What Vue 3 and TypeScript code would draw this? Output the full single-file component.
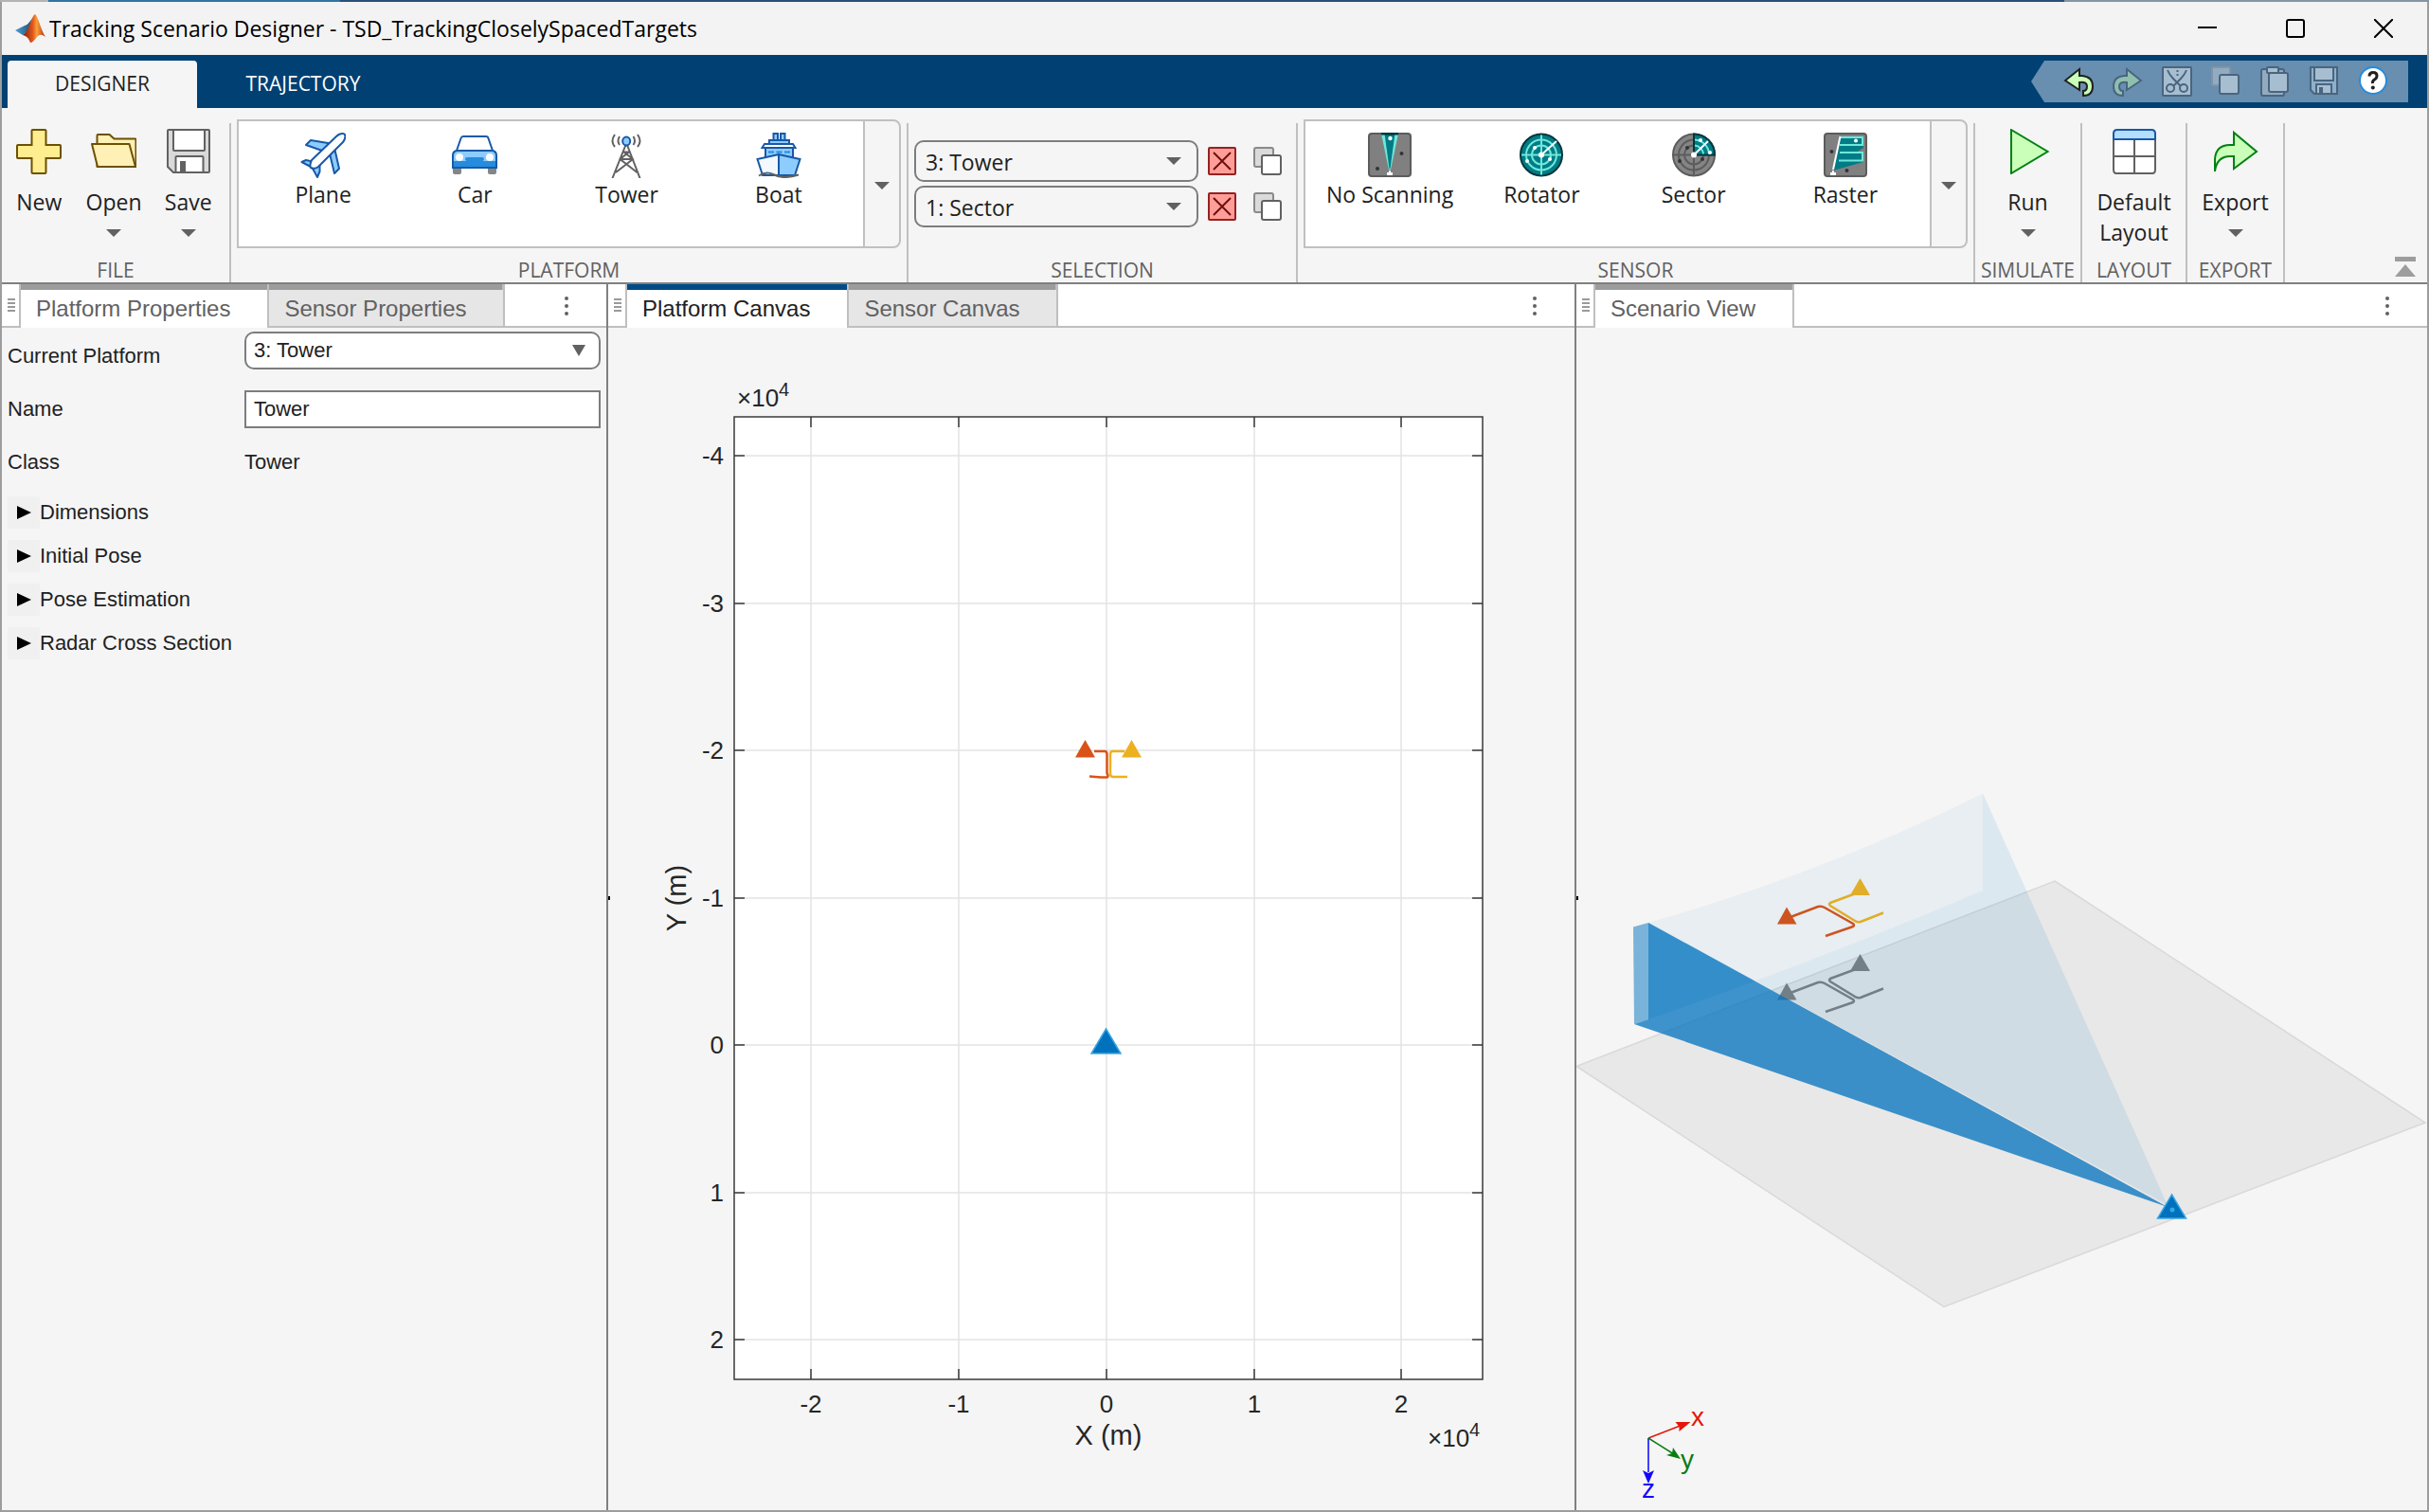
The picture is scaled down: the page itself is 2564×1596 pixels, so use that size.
<script setup lang="ts">
import { ref } from 'vue'

interface GalleryItem {
  label: string
  icon: string
}

interface Tick {
  label: string
  at: number
}

const platforms: GalleryItem[] = [
  { label: 'Plane', icon: 'plane' },
  { label: 'Car', icon: 'car' },
  { label: 'Tower', icon: 'tower' },
  { label: 'Boat', icon: 'boat' },
]

const sensors: GalleryItem[] = [
  { label: 'No Scanning', icon: 'noscan' },
  { label: 'Rotator', icon: 'rotator' },
  { label: 'Sector', icon: 'sector' },
  { label: 'Raster', icon: 'raster' },
]

const quickActions: GalleryItem[] = [
  { label: 'Undo', icon: 'undo' },
  { label: 'Redo', icon: 'redo' },
  { label: 'Cut', icon: 'cut' },
  { label: 'Copy', icon: 'qcopy' },
  { label: 'Paste', icon: 'paste' },
  { label: 'Save', icon: 'qsave' },
  { label: 'Help', icon: 'help' },
]

const platformOptions = ['1: Plane', '2: Plane', '3: Tower']
const sensorOptions = ['1: Sector']
const currentPlatform = ref('3: Tower')
const currentSensor = ref('1: Sector')
const platformName = ref('Tower')
const groups = ['Dimensions', 'Initial Pose', 'Pose Estimation', 'Radar Cross Section']

const plot = { left: 133, right: 923, top: 94, bottom: 1110 }
const xTicks: Tick[] = [
  { label: '-2', at: 214 },
  { label: '-1', at: 370 },
  { label: '0', at: 526 },
  { label: '1', at: 682 },
  { label: '2', at: 837 },
]
const yTicks: Tick[] = [
  { label: '-4', at: 135 },
  { label: '-3', at: 291 },
  { label: '-2', at: 446 },
  { label: '-1', at: 602 },
  { label: '0', at: 757 },
  { label: '1', at: 913 },
  { label: '2', at: 1068 },
]
</script>

<template>
  <svg class="sprite" aria-hidden="true">
    <symbol id="i-new" viewBox="0 0 48 48">
      <path d="M17.500 1h13q1 0 1 1v15h14.500q1 0 1 1v12q0 1-1 1H31.500v15q0 1-1 1h-13q-1 0-1-1V31H2q-1 0-1-1V18q0-1 1-1h14.500V2q0-1 1-1z" fill="#ffee90" stroke="#6e5000" stroke-width="2" />
    </symbol>
    <symbol id="i-open" viewBox="0 0 48 48">
      <path d="M6.500 40V7q0-1 1-1h12l5 4.500h22q1 0 1 1V40z" fill="#fff0b5" stroke="#6e5000" stroke-width="2" stroke-linejoin="round" />
      <path d="M1 16h39.500l6.500 24H7z" fill="#fff0b5" stroke="#6e5000" stroke-width="2" stroke-linejoin="round" />
    </symbol>
    <symbol id="i-save" viewBox="0 0 48 48">
      <path d="M3 1h42q1 0 1 1v43q0 1-1 1H8l-6-6V2q0-1 1-1z" fill="#d9d9d9" stroke="#616161" stroke-width="2" />
      <path d="M8 1v21q0 1 1 1h31q1 0 1-1V1z" fill="#fff" stroke="#616161" stroke-width="2" />
      <path d="M10.500 46V30q0-1 1-1h27q1 0 1 1v16z" fill="#fff" stroke="#616161" stroke-width="2" />
      <path d="M15 34h6v11h-6z" fill="#616161" />
    </symbol>
    <symbol id="i-plane" viewBox="0 0 48 48">
      <g stroke="#1759a8" stroke-width="2" stroke-linejoin="round">
        <path d="M11 8l21 3.500-9 7.500-17-6z" fill="#8dccff" />
        <path d="M36 16l5 22-5 5-5-21z" fill="#8dccff" />
        <path d="M1.500 31l4.500-2 9 2-4 5z" fill="#8dccff" />
        <path d="M12 36l6 11 2.500-6v-8z" fill="#8dccff" />
        <path d="M38 4c3-3 7-3.500 8.500-2.500C48 3 47.500 7 45 10L19 36c-3 2.500-6 2-8 1-1-2-.500-5 1-8z" fill="#fff" />
      </g>
    </symbol>
    <symbol id="i-car" viewBox="0 0 48 48">
      <path d="M1 36h9v6q0 2-2 2H3q-2 0-2-2zM38 36h9v6q0 2-2 2h-5q-2 0-2-2z" fill="#858585" />
      <path d="M5 19L9.500 6q.6-2 2.500-2h24q2 0 2.500 2L43 19z" fill="#fff" stroke="#1759a8" stroke-width="2" />
      <path d="M5 19h38q4 1 4 5v13H1V24q0-4 4-5z" fill="#8dccff" />
      <path d="M1 30h46v7H1z" fill="#268cdd" />
      <path d="M5 19h38q4 1 4 5v13H1V24q0-4 4-5z" fill="none" stroke="#1759a8" stroke-width="2" />
      <circle cx="8" cy="26" r="4" fill="#fff" /><circle cx="40" cy="26" r="4" fill="#fff" />
      <rect x="14" y="26" width="20" height="4" rx="2" fill="#268cdd" />
    </symbol>
    <symbol id="i-tower" viewBox="0 0 48 48">
      <g fill="none" stroke="#616161" stroke-width="2">
        <path d="M22.500 13L8.500 48M24 13l13.500 35M16.500 28h14M20 20l10 8-18 14M26.500 20l-10 8 18 14M19 20.500h8" />
        <path d="M11 2q-5 7 0 13M16 4q-3 5 0 9M35 2q5 7 0 13M30.500 4q3 5 0 9" />
      </g>
      <ellipse cx="23.200" cy="9" rx="4" ry="4.500" fill="#8dccff" stroke="#1759a8" stroke-width="2" />
    </symbol>
    <symbol id="i-boat" viewBox="0 0 48 48">
      <g fill="#8dccff" stroke="#1759a8" stroke-width="2">
        <path d="M18.500 1h4.500v7h-4.500zM26 1h4.500v7H26z" />
        <path d="M14 8h21v4H14z" />
        <path d="M9 12h30l2.500 4H6.500z" fill="#fff" />
        <path d="M10 16h29v10H10z" />
        <path d="M13 20.500h23" stroke="#268cdd" stroke-dasharray="6 2.500" />
        <path d="M24 23L1.500 28 7 45h17z" fill="#f2f9ff" />
        <path d="M24 23l22.500 5L41 45H24z" />
      </g>
      <path d="M3 45.500q8-5 15-1.500t14 3q6-.500 13-2.500" fill="none" stroke="#616161" stroke-width="2" />
    </symbol>
    <symbol id="i-noscan" viewBox="0 0 48 48">
      <rect x="2" y="1" width="44" height="45" rx="3" fill="#808080" stroke="#5c5c5c" stroke-width="2" />
      <path d="M15 1h18l-8 38h-2z" fill="#6fe8da" />
      <path d="M18.500 1h11L24.500 38h-1z" fill="#007c86" />
      <path d="M15 0h18v2.500H15z" fill="#00363c" />
      <path d="M23 40h2v2h2v3h-6v-3h2z" fill="#fff" />
      <circle cx="24.500" cy="6" r="2.200" fill="#fff" />
      <circle cx="36.500" cy="22" r="2" fill="#333" /><circle cx="11" cy="38" r="2" fill="#333" />
    </symbol>
    <symbol id="i-rotator" viewBox="0 0 48 48">
      <circle cx="24" cy="23.500" r="22" fill="#007c86" stroke="#00363c" stroke-width="2" />
      <g fill="none" stroke="#6fe8da" stroke-width="2">
        <circle cx="24" cy="23.500" r="16" /><circle cx="24" cy="23.500" r="10" />
        <path d="M24 2.500v42M3 23.500h42" />
      </g>
      <path d="M24 23.500L40 9" stroke="#fff" stroke-width="2" />
      <circle cx="24" cy="23.500" r="3" fill="#fff" />
      <circle cx="17" cy="16" r="2" fill="#fff" /><circle cx="33" cy="28" r="2" fill="#fff" /><circle cx="9" cy="30" r="2" fill="#fff" />
    </symbol>
    <symbol id="i-sector" viewBox="0 0 48 48">
      <circle cx="24" cy="23.500" r="22" fill="#858585" stroke="#5c5c5c" stroke-width="2" />
      <g fill="none" stroke="#5c5c5c" stroke-width="2">
        <circle cx="24" cy="23.500" r="16" /><circle cx="24" cy="23.500" r="10" />
        <path d="M24 2.500v42M3 23.500h42" />
      </g>
      <path d="M24 1.500a22 22 0 0 1 22 22H24z" fill="#007c86" stroke="#00363c" stroke-width="2" />
      <path d="M25 7.500a16 16 0 0 1 15 15M25 13.500a10 10 0 0 1 9 9" fill="none" stroke="#6fe8da" stroke-width="2" />
      <path d="M24 23.500L39 9" stroke="#fff" stroke-width="2" />
      <circle cx="24" cy="23.500" r="3" fill="#fff" />
      <circle cx="31" cy="8" r="2" fill="#fff" /><circle cx="41" cy="21" r="2" fill="#fff" />
      <circle cx="17" cy="16" r="2" fill="#333" /><circle cx="33" cy="28" r="2" fill="#333" /><circle cx="9" cy="30" r="2" fill="#333" />
    </symbol>
    <symbol id="i-raster" viewBox="0 0 48 48">
      <rect x="2" y="1" width="44" height="45" rx="3" fill="#808080" stroke="#5c5c5c" stroke-width="2" />
      <path d="M18 4h25v12l-8 5h8v10L11 40z" fill="#007c86" />
      <path d="M19 5h23v8H18M18 21h24v8.500H17" fill="none" stroke="#6fe8da" stroke-width="2" />
      <path d="M18.500 4L11 39" stroke="#fff" stroke-width="2" />
      <path d="M10 40h2v2h2v3H8v-3h2z" fill="#fff" />
      <circle cx="35" cy="8.500" r="2" fill="#fff" />
      <circle cx="9.500" cy="20" r="2" fill="#333" /><circle cx="25.500" cy="40" r="2" fill="#333" />
    </symbol>
    <symbol id="i-run" viewBox="0 0 48 48">
      <path d="M6 1l38.500 23L6 47z" fill="#c9ffb8" stroke="#008013" stroke-width="2" />
    </symbol>
    <symbol id="i-layout" viewBox="0 0 48 48">
      <path d="M2 11v32q0 4 3 4h38q3 0 3-4V11z" fill="#fff" stroke="#616161" stroke-width="2" />
      <path d="M24 11v36M2 29h44" stroke="#616161" stroke-width="2" />
      <path d="M2 11V5q0-4 4-4h36q4 0 4 4v6z" fill="#b3deff" stroke="#1759a8" stroke-width="2" />
    </symbol>
    <symbol id="i-export" viewBox="0 0 48 48">
      <path d="M2 45V32Q3 17 18 17h4V4l24 20-24 18V29h-4Q4 29 2 45z" fill="#c9ffb8" stroke="#008013" stroke-width="2" />
    </symbol>
    <symbol id="i-delete" viewBox="0 0 30 30">
      <rect x="1" y="1" width="28" height="28" rx="1" fill="#ff9e98" stroke="#962121" stroke-width="2" />
      <path d="M6 6l18 18M24 6L6 24" stroke="#6e1010" stroke-width="2" />
    </symbol>
    <symbol id="i-copy" viewBox="0 0 30 30">
      <rect x="1" y="1" width="20" height="20" rx="2" fill="#dadada" stroke="#8a8a8a" stroke-width="2" />
      <rect x="9" y="9" width="20" height="20" rx="2" fill="#fff" stroke="#616161" stroke-width="2" />
    </symbol>
    <symbol id="i-undo" viewBox="0 0 32 32">
      <path d="M2 15L17 3v7h3q11 1 11 11 0 10-10 10v-5q4 0 4-5t-8-4v8z" fill="#c9ffb8" stroke="#212121" stroke-width="2" />
    </symbol>
    <symbol id="i-redo" viewBox="0 0 32 32">
      <path d="M30 15L15 3v7h-3Q1 11 1 21q0 10 10 10v-5q-4 0-4-5t8-4v8z" fill="#8fbfae" stroke="#49657f" stroke-width="2" />
    </symbol>
    <symbol id="i-cut" viewBox="0 0 32 32">
      <rect x="1" y="1" width="30" height="30" rx="1" fill="#a7bed1" stroke="#49657f" stroke-width="2" />
      <g fill="none" stroke="#49657f" stroke-width="2">
        <path d="M6 4q2 5 6 9l8 8M26 4q-2 5-6 9l-8 8" />
        <circle cx="9" cy="23" r="4" /><circle cx="23" cy="23" r="4" />
        <path d="M16.500 4v8" stroke-dasharray="2 2" />
      </g>
    </symbol>
    <symbol id="i-qcopy" viewBox="0 0 32 32">
      <rect x="1" y="1" width="19" height="19" rx="1" fill="#93abc0" stroke="#7f95a8" stroke-width="2" />
      <rect x="9" y="9" width="20" height="20" rx="2" fill="#a7bed1" stroke="#49657f" stroke-width="2" />
    </symbol>
    <symbol id="i-paste" viewBox="0 0 32 32">
      <rect x="1" y="3" width="24" height="28" rx="2" fill="#93abc0" stroke="#49657f" stroke-width="2" />
      <rect x="7" y="1" width="12" height="6" rx="1" fill="#a7bed1" stroke="#49657f" stroke-width="2" />
      <rect x="9" y="7" width="20" height="20" rx="2" fill="#a7bed1" stroke="#49657f" stroke-width="2" />
    </symbol>
    <symbol id="i-qsave" viewBox="0 0 32 32">
      <path d="M1 1h28v28H5l-4-4z" fill="#8db0cc" stroke="#49657f" stroke-width="2" />
      <path d="M5 1h20v14H5z" fill="#a7bed1" stroke="#49657f" stroke-width="2" />
      <path d="M7 29V19h16v10z" fill="#a7bed1" stroke="#49657f" stroke-width="2" />
      <path d="M10 22h4v7h-4z" fill="#49657f" />
    </symbol>
    <symbol id="i-help" viewBox="0 0 32 32">
      <circle cx="15" cy="15" r="14" fill="#fff" stroke="#268cdd" stroke-width="2" />
      <path d="M11 10.500q0-4 4-4t4 3.500q0 2.500-2.500 4t-2 4" fill="none" stroke="#212121" stroke-width="3" />
      <circle cx="14.800" cy="22.500" r="2" fill="#212121" />
    </symbol>
    <symbol id="i-down" viewBox="0 0 16 8"><path d="M0 0h16L8 8z" fill="#616161" /></symbol>
  </svg>

  <div class="window">
    <header class="titlebar">
      <svg class="logo" viewBox="0 0 32 32" aria-hidden="true">
        <defs>
          <linearGradient id="wing" x1="0" y1="0" x2="1" y2="0">
            <stop offset="0" stop-color="#4d9fd6" /><stop offset="1" stop-color="#20506f" />
          </linearGradient>
          <linearGradient id="flame" x1="0" y1="0" x2="1" y2="0">
            <stop offset="0" stop-color="#7c1d12" /><stop offset=".45" stop-color="#e5591d" />
            <stop offset=".62" stop-color="#f9a13a" /><stop offset="1" stop-color="#b32a14" />
          </linearGradient>
        </defs>
        <path d="M0 18l10-5q4-1 8-8l-4 13-6 5z" fill="url(#wing)" />
        <path d="M21 1c3 2 6 16 11 24-4-3-6-3-9 0-3 4-5 6-7 6-2-5-4-7-8-8 7-4 9-20 13-22z" fill="url(#flame)" />
      </svg>
      <h1>Tracking Scenario Designer - TSD_TrackingCloselySpacedTargets</h1>
      <div class="controls">
        <button type="button" aria-label="Minimize">
          <svg viewBox="0 0 20 20"><path d="M0 9h20" stroke="#000" stroke-width="2" /></svg>
        </button>
        <button type="button" aria-label="Maximize">
          <svg viewBox="0 0 20 20"><rect x="1" y="1" width="18" height="18" rx="2" fill="none" stroke="#000" stroke-width="2" /></svg>
        </button>
        <button type="button" aria-label="Close">
          <svg viewBox="0 0 20 20"><path d="M0 0l20 20M20 0L0 20" stroke="#000" stroke-width="2" /></svg>
        </button>
      </div>
    </header>

    <nav class="ribbon-tabs">
      <button type="button" class="ribbon-tab active">DESIGNER</button>
      <button type="button" class="ribbon-tab">TRAJECTORY</button>
      <div class="quick">
        <button v-for="a in quickActions" :key="a.icon" type="button" :aria-label="a.label">
          <svg><use :href="`#i-${a.icon}`" /></svg>
        </button>
      </div>
    </nav>

    <div class="ribbon">
      <section class="group file">
        <div class="tools">
          <button type="button" class="tool"><svg class="big"><use href="#i-new" /></svg><span>New</span></button>
          <button type="button" class="tool"><svg class="big"><use href="#i-open" /></svg><span>Open</span><svg class="down"><use href="#i-down" /></svg></button>
          <button type="button" class="tool"><svg class="big"><use href="#i-save" /></svg><span>Save</span><svg class="down"><use href="#i-down" /></svg></button>
        </div>
        <h2>FILE</h2>
      </section>
      <i class="rule"></i>
      <section class="group wide">
        <div class="gallery">
          <div class="items">
            <button v-for="p in platforms" :key="p.icon" type="button" class="item">
              <svg class="big"><use :href="`#i-${p.icon}`" /></svg><span>{{ p.label }}</span>
            </button>
          </div>
          <button type="button" class="more" aria-label="More platforms"><svg class="down"><use href="#i-down" /></svg></button>
        </div>
        <h2>PLATFORM</h2>
      </section>
      <i class="rule"></i>
      <section class="group">
        <div class="selection">
          <div class="picker">
            <div class="combo">
              <select v-model="currentPlatform" aria-label="Selected platform">
                <option v-for="o in platformOptions" :key="o">{{ o }}</option>
              </select>
              <svg class="down"><use href="#i-down" /></svg>
            </div>
            <button type="button" class="mini" aria-label="Delete platform"><svg><use href="#i-delete" /></svg></button>
            <button type="button" class="mini copy" aria-label="Duplicate platform"><svg><use href="#i-copy" /></svg></button>
          </div>
          <div class="picker">
            <div class="combo">
              <select v-model="currentSensor" aria-label="Selected sensor">
                <option v-for="o in sensorOptions" :key="o">{{ o }}</option>
              </select>
              <svg class="down"><use href="#i-down" /></svg>
            </div>
            <button type="button" class="mini" aria-label="Delete sensor"><svg><use href="#i-delete" /></svg></button>
            <button type="button" class="mini copy" aria-label="Duplicate sensor"><svg><use href="#i-copy" /></svg></button>
          </div>
        </div>
        <h2>SELECTION</h2>
      </section>
      <i class="rule"></i>
      <section class="group wide">
        <div class="gallery">
          <div class="items">
            <button v-for="s in sensors" :key="s.icon" type="button" class="item">
              <svg class="big"><use :href="`#i-${s.icon}`" /></svg><span>{{ s.label }}</span>
            </button>
          </div>
          <button type="button" class="more" aria-label="More sensors"><svg class="down"><use href="#i-down" /></svg></button>
        </div>
        <h2>SENSOR</h2>
      </section>
      <i class="rule"></i>
      <section class="group simulate">
        <button type="button" class="tool"><svg class="big"><use href="#i-run" /></svg><span>Run</span><svg class="down"><use href="#i-down" /></svg></button>
        <h2>SIMULATE</h2>
      </section>
      <i class="rule"></i>
      <section class="group layout">
        <button type="button" class="tool"><svg class="big"><use href="#i-layout" /></svg><span>Default Layout</span></button>
        <h2>LAYOUT</h2>
      </section>
      <i class="rule"></i>
      <section class="group export">
        <button type="button" class="tool"><svg class="big"><use href="#i-export" /></svg><span>Export</span><svg class="down"><use href="#i-down" /></svg></button>
        <h2>EXPORT</h2>
      </section>
      <i class="rule"></i>
      <button type="button" class="collapse" aria-label="Collapse toolstrip">
        <svg viewBox="0 0 22 22"><path d="M0 0h22v5H0zM11 8l11 13H0z" fill="#9d9d9d" /></svg>
      </button>
    </div>

    <main class="docks">
      <section class="dock">
        <div class="tabs">
          <div class="grip"><i></i><i></i><i></i><i></i></div>
          <button type="button" class="tab front">Platform Properties</button>
          <button type="button" class="tab">Sensor Properties</button>
          <button type="button" class="menu" aria-label="Panel options"><i></i><i></i><i></i></button>
        </div>
        <form class="form" @submit.prevent>
          <div class="row">
            <label for="platform">Current Platform</label>
            <div class="combo white">
              <select id="platform" v-model="currentPlatform">
                <option v-for="o in platformOptions" :key="o">{{ o }}</option>
              </select>
              <svg class="arrow" viewBox="0 0 14 12"><path d="M0 0h14L7 12z" fill="#616161" /></svg>
            </div>
          </div>
          <div class="row">
            <label for="name">Name</label>
            <input id="name" v-model="platformName" type="text" />
          </div>
          <div class="row">
            <span>Class</span>
            <span>Tower</span>
          </div>
        </form>
        <div class="expanders">
          <button v-for="g in groups" :key="g" type="button">
            <i><svg viewBox="0 0 15 14"><path d="M0 0l15 7-15 7z" /></svg></i>{{ g }}
          </button>
        </div>
      </section>

      <section class="dock">
        <div class="tabs">
          <div class="grip"><i></i><i></i><i></i><i></i></div>
          <button type="button" class="tab front focused">Platform Canvas</button>
          <button type="button" class="tab">Sensor Canvas</button>
          <button type="button" class="menu" aria-label="Panel options"><i></i><i></i><i></i></button>
        </div>
        <div class="canvas">
          <svg class="figure" viewBox="0 0 1020 1248" role="img" aria-label="Platform positions">
            <rect :x="plot.left" :y="plot.top" :width="plot.right - plot.left" :height="plot.bottom - plot.top" fill="#fff" />
            <g stroke="#e3e3e3" stroke-width="1.500">
              <path v-for="t in xTicks" :key="t.label" :d="`M${t.at} ${plot.top}V${plot.bottom}`" />
              <path v-for="t in yTicks" :key="t.label" :d="`M${plot.left} ${t.at}H${plot.right}`" />
            </g>
            <g stroke="#3a3a3a" stroke-width="1.500" fill="none">
              <path v-for="t in xTicks" :key="t.label" :d="`M${t.at} ${plot.top}v11M${t.at} ${plot.bottom}v-11`" />
              <path v-for="t in yTicks" :key="t.label" :d="`M${plot.left} ${t.at}h11M${plot.right} ${t.at}h-11`" />
              <rect :x="plot.left" :y="plot.top" :width="plot.right - plot.left" :height="plot.bottom - plot.top" />
            </g>
            <g class="ticks">
              <text v-for="t in xTicks" :key="t.label" :x="t.at" y="1145" text-anchor="middle">{{ t.label }}</text>
              <text v-for="t in yTicks" :key="t.label" x="122" :y="t.at + 9" text-anchor="end">{{ t.label }}</text>
              <text x="136" y="83">×10<tspan class="sup" dy="-11">4</tspan></text>
              <text x="865" y="1181">×10<tspan class="sup" dy="-11">4</tspan></text>
              <text class="axis" x="528" y="1179" text-anchor="middle">X (m)</text>
              <text class="axis" transform="translate(82 602) rotate(-90)" text-anchor="middle">Y (m)</text>
            </g>
            <g fill="none" stroke-width="2.500">
              <path d="M545 447H532.500q-2.500 0-2.500 3v21q0 3 3 3H548" stroke="#edb120" />
              <path d="M513 447h11q2.500 0 2.500 3v20q2 4 0 4.500H520l-12-1" stroke="#d95319" />
            </g>
            <path d="M503.500 435l10.500 18.500H493z" fill="#d95319" />
            <path d="M552.500 435l10.500 18.500H542z" fill="#edb120" />
            <path d="M525.500 740l15.500 26h-31z" fill="#0072bd" stroke="#38a5e4" stroke-width="1.500" />
            <path d="M0 600h2v4H0z" fill="#000" />
          </svg>
        </div>
      </section>

      <section class="dock">
        <div class="tabs">
          <div class="grip"><i></i><i></i><i></i><i></i></div>
          <button type="button" class="tab front last">Scenario View</button>
          <button type="button" class="menu" aria-label="Panel options"><i></i><i></i><i></i></button>
        </div>
        <div class="canvas">
          <svg class="figure" viewBox="0 0 898 1248" role="img" aria-label="Three-dimensional scenario">
            <path d="M505 584L896 839 388 1033.500 0 779.500z" fill="#e8e8e8" stroke="#d9d9d9" stroke-width="1.500" />
            <g transform="translate(0 80)" stroke="#808080" fill="#808080">
              <path d="M226 622l29-11q4-1 7 1l30 17q2 2 0 3L263 642" fill="none" stroke-width="2.500" />
              <path d="M295 597l-27 10q-2 1 0 3l26 16q3 2 6 1l24-9.500" fill="none" stroke-width="2.500" />
              <path d="M222 611.500l10.500 18H212zM299.500 581L310 599h-21z" stroke="none" />
            </g>
            <g fill="none" stroke-width="2.500">
              <path d="M226 622l29-11q4-1 7 1l30 17q2 2 0 3L263 642" stroke="#d95319" />
              <path d="M295 597l-27 10q-2 1 0 3l26 16q3 2 6 1l24-9.500" stroke="#edb120" />
            </g>
            <path d="M222 611.500l10.500 18H212z" fill="#d95319" />
            <path d="M299.500 581L310 599h-21z" fill="#edb120" />
            <path d="M76 628Q260 576 429 491.500V594Q260 666 76 730z" fill="#0072bd" fill-opacity=".05" />
            <path d="M429 491.500L624 926 76 628 76 730Q260 666 429 594z" fill="#0072bd" fill-opacity=".1" />
            <path d="M60 632.500L76 628V730L61 735z" fill="#0072bd" fill-opacity=".5" />
            <path d="M76 628L624 928 61 735 76 730z" fill="#0072bd" fill-opacity=".75" />
            <path d="M628.500 915l15 25h-30z" fill="#0072bd" stroke="#38a5e4" stroke-width="1.500" />
            <circle cx="629" cy="931" r="2.500" fill="#38a5e4" />
            <path d="M76 1172v36" stroke="#4040ff" stroke-width="2" />
            <path d="M76 1220l-6-14 6 3 6-3z" fill="#1400ff" />
            <path d="M76 1172l36-14" stroke="#e3170a" stroke-width="1.500" />
            <path d="M120.500 1155l-12 10v-5l-4-5z" fill="#e3170a" />
            <path d="M76 1172l27 17" stroke="#0a7d12" stroke-width="1.500" />
            <path d="M110 1194l-15-4 6-2 1-6z" fill="#0a7d12" />
            <g class="axes">
              <text x="121" y="1159" fill="#e3170a">x</text>
              <text x="110" y="1204" fill="#0a7d12">y</text>
              <text x="69" y="1235" fill="#1400ff">z</text>
            </g>
            <path d="M0 600h2v4H0z" fill="#000" />
          </svg>
        </div>
      </section>
    </main>
  </div>
</template>

<style>
body {
  margin: 0;
}
</style>

<style scoped>
.sprite {
  display: none;
}

.window {
  box-sizing: border-box;
  min-height: 100vh;
  display: flex;
  flex-direction: column;
  padding: 2px;
  background: linear-gradient(90deg, #b3b3b3 2%, #2f75a4 2%, #2f75a4 14%, #2b4f78 14%, #2b4f78 85%, #8496a5 85%) top / 100% 2px no-repeat, #9d9d9d;
  color: #212121;
  font: 23px/32px 'Open Sans', 'Noto Sans', sans-serif;
}

button {
  margin: 0;
  padding: 0;
  border: 0;
  background: none;
  color: inherit;
  font: inherit;
}

svg {
  display: block;
}

h1,
h2 {
  margin: 0;
  font-weight: 400;
}

.titlebar {
  display: flex;
  align-items: center;
  height: 56px;
  background: #f3f3f3;
  color: #000;
}

.logo {
  width: 32px;
  height: 32px;
  margin: 0 4px 0 14px;
}

h1 {
  font-size: 23px;
}

.controls {
  display: flex;
  margin-left: auto;
}

.controls button {
  display: grid;
  place-items: center;
  width: 93px;
  height: 54px;
}

.controls svg {
  width: 20px;
  height: 20px;
}

.ribbon-tabs {
  display: flex;
  align-items: flex-start;
  gap: 12px;
  height: 50px;
  padding: 6px 20px 0 6px;
  background: #004072;
}

.ribbon-tab {
  width: 200px;
  height: 50px;
  padding-bottom: 2px;
  color: #fff;
  font-size: 21px;
}

.ribbon-tab.active {
  border-radius: 4px 4px 0 0;
  background: #f5f5f5;
  color: #212121;
}

.quick {
  display: flex;
  align-items: center;
  gap: 20px;
  height: 44px;
  margin-left: auto;
  padding: 0 20px 0 34px;
  background: #688eb0;
  clip-path: polygon(14px 0, 100% 0, 100% 100%, 14px 100%, 0 50%);
}

.quick svg {
  width: 32px;
  height: 32px;
}

.ribbon {
  display: flex;
  height: 184px;
  border-bottom: 2px solid #808080;
  background: #f5f5f5;
}

.rule {
  width: 2px;
  margin-top: 16px;
  background: #c0c0c0;
}

.group {
  display: flex;
  flex-direction: column;
  justify-content: space-between;
}

.group h2 {
  color: #616161;
  font-size: 21px;
  line-height: 26px;
  text-align: center;
}

.group.file {
  width: 240px;
}

.group.wide {
  width: 713px;
}

.group.simulate {
  width: 111px;
}

.group.layout {
  width: 109px;
}

.group.export {
  width: 101px;
}

.tools {
  display: flex;
  padding-right: 4px;
}

.tool {
  display: flex;
  flex: 1;
  flex-direction: column;
  align-items: center;
  justify-content: flex-start;
  padding-top: 22px;
}

.tool span {
  margin-top: 13px;
}

.big {
  width: 48px;
  height: 48px;
}

.down {
  width: 16px;
  height: 8px;
}

.tool .down {
  margin-top: 13px;
}

.gallery {
  display: flex;
  height: 132px;
  margin: 12px 6px 0;
  border: 2px solid #c0c0c0;
  border-radius: 0 8px 8px 0;
  overflow: hidden;
}

.items {
  display: flex;
  flex: 1;
  padding: 0 9px;
  background: #fff;
}

.item {
  display: flex;
  flex: 1 1 0;
  flex-direction: column;
  gap: 1px;
  align-items: center;
  justify-content: flex-start;
  padding-top: 12px;
}

.more {
  display: grid;
  place-items: center;
  width: 38px;
  padding-top: 4px;
  border-left: 2px solid #c0c0c0;
}

.selection {
  display: flex;
  flex-direction: column;
  gap: 4px;
  padding: 34px 15px 0 6px;
}

.picker {
  display: flex;
  align-items: center;
}

.combo {
  display: grid;
  align-items: center;
}

.combo select,
.combo svg {
  grid-area: 1 / 1;
}

.combo svg {
  justify-self: end;
  pointer-events: none;
}

.combo select {
  box-sizing: border-box;
  width: 100%;
  height: 44px;
  padding: 2px 10px 0;
  border: 2px solid #7d7d7d;
  border-radius: 10px;
  appearance: none;
  background: #f5f5f5;
  color: inherit;
  font: inherit;
}

.picker .combo {
  width: 300px;
}

.picker .down {
  margin-right: 18px;
}

.mini {
  margin-left: 10px;
}

.mini.copy {
  margin-left: 18px;
}

.mini svg {
  width: 30px;
  height: 30px;
}

.collapse {
  align-self: flex-end;
  margin: 0 12px 5px auto;
}

.collapse svg {
  width: 22px;
  height: 22px;
}

.docks {
  display: grid;
  flex: 1;
  grid-template-columns: minmax(0, 640fr) minmax(0, 1022fr) minmax(0, 898fr);
  background: #f5f5f5;
  font-family: 'Liberation Sans', Arial, sans-serif;
}

.dock {
  display: flex;
  flex-direction: column;
  border-right: 2px solid #808080;
}

.dock:last-child {
  border-right: 0;
}

.tabs {
  display: flex;
  height: 46px;
  background: linear-gradient(#bfbfbf, #bfbfbf) bottom / 100% 2px no-repeat, #fff;
  font-size: 24px;
}

.grip {
  display: flex;
  flex-direction: column;
  gap: 2px;
  box-sizing: border-box;
  width: 18px;
  padding: 15px 4px 0 6px;
}

.grip i {
  height: 2px;
  background: #9a9a9a;
}

.tab {
  box-sizing: border-box;
  padding: 8px 38px 0 16px;
  border: solid #bfbfbf;
  border-width: 0 0 2px 2px;
  background: linear-gradient(#9c9c9c, #9c9c9c) top / 100% 6px no-repeat, #e6e6e6;
  color: #616161;
  white-space: nowrap;
}

.tab.front {
  padding-right: 39px;
  padding-bottom: 2px;
  border-bottom: 0;
  background-color: #fff;
}

.tab:not(.front),
.tab.last {
  border-right: 2px solid #bfbfbf;
}

.tab.focused {
  background-image: linear-gradient(#004b87, #004b87);
  color: #212121;
}

.menu {
  display: flex;
  flex-direction: column;
  gap: 4px;
  margin: 13px 40px 0 auto;
}

.menu i {
  width: 4px;
  height: 4px;
  border-radius: 2px;
  background: #616161;
}

.form {
  padding: 2px 6px 0;
  font-size: 22px;
}

.row {
  display: grid;
  grid-template-columns: 250px minmax(0, 1fr);
  align-items: center;
  height: 56px;
}

.combo.white {
  align-self: start;
  padding-top: 2px;
}

.combo.white select {
  height: 40px;
  padding: 0 8px;
  background: #fff;
}

.arrow {
  width: 14px;
  height: 12px;
  margin-right: 16px;
}

input {
  box-sizing: border-box;
  width: 100%;
  height: 40px;
  padding: 0 8px;
  border: 2px solid #7d7d7d;
  border-radius: 0;
  background: #fff;
  color: inherit;
  font: inherit;
}

.expanders {
  display: flex;
  flex-direction: column;
  align-items: flex-start;
  gap: 12px;
  padding: 8px 6px;
  font-size: 22px;
}

.expanders button {
  display: flex;
  align-items: center;
}

.expanders i {
  display: grid;
  place-items: center;
  width: 34px;
  height: 34px;
  background: #f0f0f0;
}

.expanders svg {
  width: 15px;
  height: 14px;
}

.canvas {
  display: flex;
  flex: 1;
}

.figure {
  width: 100%;
  height: 100%;
}

.ticks {
  fill: #262626;
  font-size: 26px;
}

.sup {
  font-size: 20px;
}

.axis {
  font-size: 29px;
}

.axes {
  font-size: 28px;
}
</style>
